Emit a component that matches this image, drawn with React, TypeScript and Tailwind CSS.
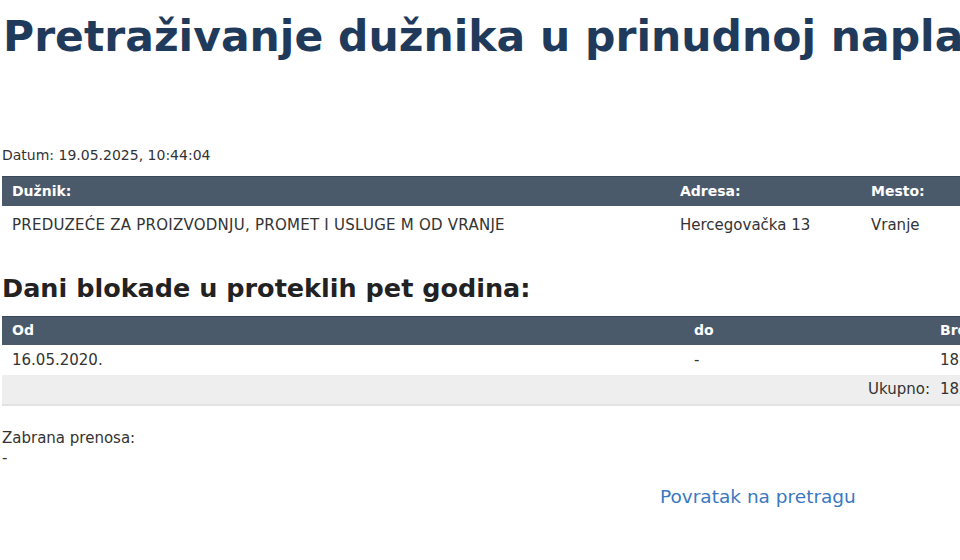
import React from 'react';

const font = { fontFamily: '"DejaVu Sans", "Noto Sans", sans-serif' };

export default function App() {
  return (
    <div className="w-[960px] h-[560px] overflow-hidden bg-white text-[#333]" style={font}>
      <div className="w-[1200px]">
        <h1 className="pl-[3px] pt-[5px] text-[42.5px] leading-[64px] font-bold text-[#1f3a5a] whitespace-nowrap">
          Pretraživanje dužnika u prinudnoj naplati
        </h1>

        <p className="mt-[77px] pl-[2px] text-[14px] leading-[18px]">Datum: 19.05.2025, 10:44:04</p>

        {/* Dužnik */}
        <table className="mt-[12px] ml-[2px] w-[1100px] border-collapse table-fixed">
          <colgroup>
            <col className="w-[668px]" />
            <col className="w-[191px]" />
            <col />
          </colgroup>
          <thead>
            <tr className="bg-[#4b5a6b] text-white text-[14px] font-bold h-[29px] border-t border-[#3a4756]">
              <th className="text-left pl-[10px]">Dužnik:</th>
              <th className="text-left pl-[10px]">Adresa:</th>
              <th className="text-left pl-[10px]">Mesto:</th>
            </tr>
          </thead>
          <tbody>
            <tr className="h-[40px] text-[15px]">
              <td className="pl-[10px] pb-[1px] tracking-[0.25px]">PREDUZEĆE ZA PROIZVODNJU, PROMET I USLUGE M OD VRANJE</td>
              <td className="pl-[10px] pb-[1px]">Hercegovačka 13</td>
              <td className="pl-[10px] pb-[1px]">Vranje</td>
            </tr>
          </tbody>
        </table>

        <h2 className="mt-[26px] pl-[2px] text-[25.5px] leading-[32px] font-bold text-[#222]">
          Dani blokade u proteklih pet godina:
        </h2>

        <table className="mt-[12px] ml-[2px] w-[1100px] border-collapse table-fixed">
          <colgroup>
            <col className="w-[682px]" />
            <col className="w-[246px]" />
            <col />
          </colgroup>
          <thead>
            <tr className="bg-[#4b5a6b] text-white text-[14px] font-bold h-[29px] border-t border-[#3a4756]">
              <th className="text-left pl-[10px]">Od</th>
              <th className="text-left pl-[10px]">do</th>
              <th className="text-left pl-[10px]">Broj dana</th>
            </tr>
          </thead>
          <tbody className="text-[15px]">
            <tr className="h-[30px]">
              <td className="pl-[10px]">16.05.2020.</td>
              <td className="pl-[10px]">-</td>
              <td className="pl-[10px]">1829</td>
            </tr>
            <tr className="h-[30px] bg-[#eeeeee] border-b-2 border-[#e2e2e2]">
              <td colSpan={2} className="text-right pr-0">Ukupno:</td>
              <td className="pl-[10px]">1829</td>
            </tr>
          </tbody>
        </table>

        <p className="mt-[22px] pl-[2px] text-[15px] leading-[20px]">Zabrana prenosa:</p>
        <p className="pl-[2px] text-[15px] leading-[20px]">-</p>

        <a href="#" className="block mt-[16px] pl-[660px] text-[18.5px] leading-[26px] text-[#3a78c0]">
          Povratak na pretragu
        </a>
      </div>
    </div>
  );
}
